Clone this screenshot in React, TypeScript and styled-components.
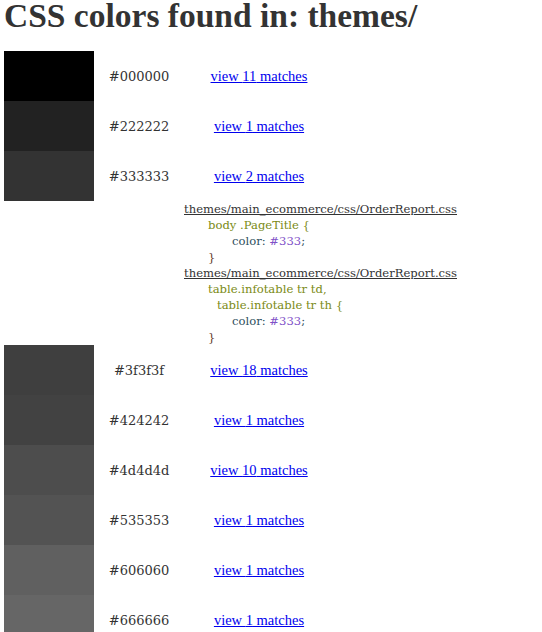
import styled, { createGlobalStyle } from "styled-components";

const GlobalStyle = createGlobalStyle`
  body {
    margin: 0;
    padding: 4px;
    background: #fff;
    color: #333;
    font-family: "DejaVu Serif", "Liberation Serif", serif;
  }
`;

const Title = styled.h1`
  margin: 0 0 24px 0;
  font-family: "Liberation Serif", serif;
  font-size: 33.5px;
  line-height: 23px;
  font-weight: bold;
  color: #333;
`;

const List = styled.div`
  display: flex;
  flex-direction: column;
`;

const Row = styled.div`
  display: flex;
  align-items: center;
  height: 50px;
`;

const Swatch = styled.div<{ $color: string }>`
  width: 90px;
  height: 50px;
  background: ${(p) => p.$color};
`;

const Hex = styled.div`
  width: 90px;
  text-align: center;
  font-size: 13px;
`;

const LinkCell = styled.div`
  width: 150px;
  text-align: center;
  font-family: "Liberation Serif", serif;
  font-size: 14.5px;
  a {
    color: #0000ee;
    text-decoration: underline;
  }
`;

const Details = styled.div`
  padding-left: 180px;
  font-size: 11.6px;
  line-height: 16px;
`;

const FilePath = styled.div`
  color: #333;
  text-decoration: underline;
`;

const Selector = styled.div<{ $extra?: number }>`
  padding-left: ${(p) => 24 + (p.$extra ?? 0)}px;
  color: #7a8a14;
`;

const Decl = styled.div`
  padding-left: 48px;
  color: #2f5060;
  span {
    color: #8050c8;
  }
`;

const Close = styled.div`
  padding-left: 24px;
  color: #5a3020;
`;

const colors = [
  { hex: "#000000", n: 11 },
  { hex: "#222222", n: 1 },
  { hex: "#333333", n: 2 },
  { hex: "#3f3f3f", n: 18 },
  { hex: "#424242", n: 1 },
  { hex: "#4d4d4d", n: 10 },
  { hex: "#535353", n: 1 },
  { hex: "#606060", n: 1 },
  { hex: "#666666", n: 1 },
];

const ColorRow = ({ hex, n }: { hex: string; n: number }) => (
  <Row>
    <Swatch $color={hex} />
    <Hex>{hex}</Hex>
    <LinkCell>
      <a href="#">view {n} matches</a>
    </LinkCell>
  </Row>
);

const App = () => {
  return (
    <>
      <GlobalStyle />
      <Title>CSS colors found in: themes/</Title>
      <List>
        {colors.map((c) => (
          <div key={c.hex}>
            <ColorRow {...c} />
            {c.hex === "#333333" && (
              <Details>
                <FilePath>themes/main_ecommerce/css/OrderReport.css</FilePath>
                <Selector>body .PageTitle {"{"}</Selector>
                <Decl>
                  color: <span>#333</span>;
                </Decl>
                <Close>{"}"}</Close>
                <FilePath>themes/main_ecommerce/css/OrderReport.css</FilePath>
                <Selector>table.infotable tr td,</Selector>
                <Selector $extra={9}>table.infotable tr th {"{"}</Selector>
                <Decl>
                  color: <span>#333</span>;
                </Decl>
                <Close>{"}"}</Close>
              </Details>
            )}
          </div>
        ))}
      </List>
    </>
  );
};

export default App;
